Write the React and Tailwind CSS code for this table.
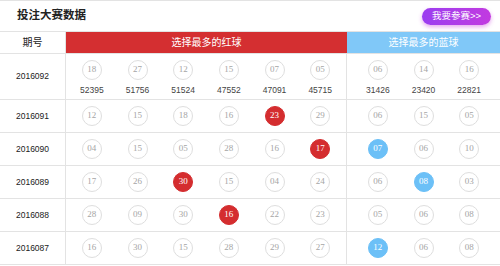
import React from "react";

const rows = [
  { id: "2016092", red: ["18", "27", "12", "15", "07", "05"], blue: ["06", "14", "16"], redCounts: ["52395", "51756", "51524", "47552", "47091", "45715"], blueCounts: ["31426", "23420", "22821"] },
  { id: "2016091", red: ["12", "15", "18", "16", "23", "29"], blue: ["06", "15", "05"], redHit: 4 },
  { id: "2016090", red: ["04", "15", "05", "28", "16", "17"], blue: ["07", "06", "10"], redHit: 5, blueHit: 0 },
  { id: "2016089", red: ["17", "26", "30", "15", "04", "24"], blue: ["06", "08", "03"], redHit: 2, blueHit: 1 },
  { id: "2016088", red: ["28", "09", "30", "16", "22", "23"], blue: ["05", "06", "08"], redHit: 3 },
  { id: "2016087", red: ["16", "30", "15", "28", "29", "27"], blue: ["12", "06", "08"], blueHit: 0 },
];

const Ball = ({ num, hit }) => {
  let cls = "border border-[#dedede] text-[#a5a5a5] bg-white";
  if (hit === "red") cls = "bg-[#d42d2f] text-white border border-[#d42d2f]";
  if (hit === "blue") cls = "bg-[#6cc0f7] text-white border border-[#6cc0f7]";
  return (
    <div
      className={`flex h-[20px] w-[20px] items-center justify-center rounded-full text-[9px] ${cls}`}
      style={{ fontFamily: '"Liberation Serif", serif' }}
    >
      {num}
    </div>
  );
};

const App = () => {
  return (
    <div
      className="h-[266px] w-[500px] overflow-hidden bg-white text-[#333]"
      style={{ fontFamily: '"Liberation Sans", "Noto Sans CJK SC", sans-serif' }}
    >
      <div className="flex h-[32px] items-center justify-between border-t border-b border-[#e3e3e3] pl-[17px] pr-[9px]">
        <span className="text-[11.5px] font-bold text-[#222]">投注大赛数据</span>
        <span className="flex h-[17px] w-[69px] items-center justify-center rounded-full bg-gradient-to-r from-[#9b3cf0] to-[#c23ae0] text-[9.5px] text-white shadow-[0_2px_4px_rgba(200,60,220,0.45)]">
          我要参赛&gt;&gt;
        </span>
      </div>

      <div className="grid h-[22px] grid-cols-[66px_281px_1fr] border-b border-[#e3e3e3]">
        <div className="flex items-center justify-center border-r border-[#e3e3e3] text-[10px] text-[#222]">期号</div>
        <div className="flex items-center justify-center bg-[#d42f31] text-[10px] text-white">选择最多的红球</div>
        <div className="flex items-center justify-center bg-[#80c8f8] text-[10px] text-white">选择最多的蓝球</div>
      </div>

      {rows.map((r, i) => (
        <div
          key={r.id}
          className={`grid grid-cols-[66px_281px_1fr] border-b border-[#e3e3e3] ${i === 0 ? "h-[46px]" : "h-[33px]"}`}
        >
          <div className="flex items-center justify-center border-r border-[#e3e3e3] text-[8.5px] text-[#222]">
            {r.id}
          </div>
          <div className="flex border-r border-[#e3e3e3] px-[3px]">
            {r.red.map((n, j) => (
              <div key={j} className={`flex flex-1 flex-col items-center ${i === 0 ? "pt-[6px]" : "justify-center"}`}>
                <Ball num={n} hit={r.redHit === j ? "red" : null} />
                {r.redCounts && <span className="mt-[4px] text-[8.5px] text-[#444]">{r.redCounts[j]}</span>}
              </div>
            ))}
          </div>
          <div className="flex px-[8px]">
            {r.blue.map((n, j) => (
              <div key={j} className={`flex flex-1 flex-col items-center ${i === 0 ? "pt-[6px]" : "justify-center"}`}>
                <Ball num={n} hit={r.blueHit === j ? "blue" : null} />
                {r.blueCounts && <span className="mt-[4px] text-[8.5px] text-[#444]">{r.blueCounts[j]}</span>}
              </div>
            ))}
          </div>
        </div>
      ))}
    </div>
  );
};

export default App;
